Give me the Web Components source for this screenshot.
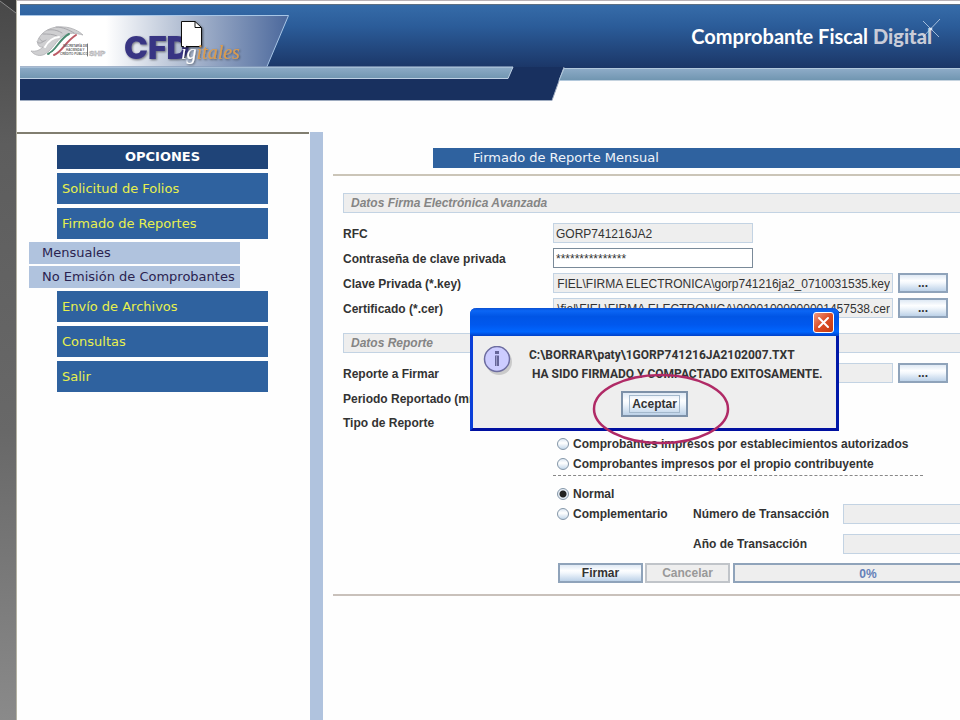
<!DOCTYPE html>
<html lang="es">
<head>
    <meta charset="utf-8">
    <title>Comprobante Fiscal Digital</title>
    <style>
        body {
            margin: 0;
            background-color: #fefefe;
            font-family: "Liberation Sans", sans-serif;
            font-size: 12px;
            color: #333;
        }
    </style>
</head>
<body>
    <cfd-app>
        <cfd-banner slot="banner"></cfd-banner>

        <side-menu slot="menu" heading="OPCIONES">
            <menu-item>Solicitud de Folios</menu-item>
            <menu-item>Firmado de Reportes</menu-item>
            <menu-item sub>Mensuales</menu-item>
            <menu-item sub>No Emisión de Comprobantes</menu-item>
            <menu-item>Envío de Archivos</menu-item>
            <menu-item>Consultas</menu-item>
            <menu-item>Salir</menu-item>
        </side-menu>

        <report-panel heading="Firmado de Reporte Mensual">
            <form-section heading="Datos Firma Electrónica Avanzada">
                <form-field label="RFC" value="GORP741216JA2" readonly></form-field>
                <form-field label="Contraseña de clave privada" value="***************"></form-field>
                <form-field label="Clave Privada (*.key)" value="FIEL\FIRMA ELECTRONICA\gorp741216ja2_0710031535.key" readonly browse></form-field>
                <form-field label="Certificado (*.cer)" value="\fiel\FIEL\FIRMA ELECTRONICA\00001000000001457538.cer" readonly browse></form-field>
            </form-section>
            <form-section heading="Datos Reporte">
                <form-field label="Reporte a Firmar" value="" readonly browse></form-field>
                <form-field label="Periodo Reportado (mmaaaa)" value=""></form-field>
                <report-type></report-type>
            </form-section>
            <action-bar></action-bar>
        </report-panel>

        <message-dialog slot="dialog">
            <span>C:\BORRAR\paty\1GORP741216JA2102007.TXT</span>
            <span>&nbsp;HA SIDO FIRMADO Y COMPACTADO EXITOSAMENTE.</span>
        </message-dialog>
    </cfd-app>

    <script>
        // look of the Swing buttons, shared by every element that has one
        const buttonStyle = `
            button {
                box-sizing: border-box;
                height: 20px;
                padding: 0;
                border: 2px solid #8fa3ba;
                border-radius: 0;
                background: linear-gradient(#dfe9f4, #fdfeff 35%, #f2f7fc 50%, #bdd2e8);
                color: #333;
                font: bold 12px "Liberation Sans", sans-serif;
                line-height: 16px;
            }

            button:disabled {
                border-color: #c0c4c9;
                background: #eee;
                color: #999;
            }
        `;

        class CfdApp extends HTMLElement {
            constructor() {
                super();
                this.attachShadow({ mode: "open" }).innerHTML = `
                    <style>
                        :host {
                            display: grid;
                            grid-template-columns: 17px minmax(0, 1fr);
                            min-height: 100vh;
                            position: relative;
                            overflow: hidden;
                        }

                        .edge {
                            box-sizing: border-box;
                            border-right: 1px solid #b5b3a4;
                            background: linear-gradient(#484848, #5d5d5d 20%, #686868 60%, #8a8a8a);
                        }

                        .edge svg {
                            display: block;
                        }

                        .page {
                            display: flex;
                            flex-direction: column;
                        }

                        .frames {
                            display: flex;
                            flex: 1;
                        }

                        .menu {
                            flex: 0 0 292px;
                            border-top: 2px solid #817e70;
                        }

                        .divider {
                            flex: 0 0 13px;
                            margin-left: 1px;
                            background-color: #b0c3de;
                        }

                        .content {
                            flex: 1;
                            min-width: 0;
                            overflow: hidden;
                        }
                    </style>
                    <div class="edge">
                        <svg width="16" height="16"><path d="M0 1 16 13V0H0z" fill="#3a3a3a"/><path d="M0 1 16 13" stroke="#8b8b8b"/></svg>
                    </div>
                    <div class="page">
                        <slot name="banner"></slot>
                        <div class="frames">
                            <div class="menu"><slot name="menu"></slot></div>
                            <div class="divider"></div>
                            <div class="content"><slot></slot></div>
                        </div>
                    </div>
                    <slot name="dialog"></slot>
                `;
            }
        }

        class CfdBanner extends HTMLElement {
            constructor() {
                super();
                this.attachShadow({ mode: "open" }).innerHTML = `
                    <style>
                        :host {
                            display: flex;
                            height: 128px;
                            padding-left: 3px;
                            border-top: 1px solid #b9b2b6;
                            padding-top: 3px;
                        }

                        .art {
                            flex: none;
                            display: block;
                        }

                        .brand {
                            flex: 1;
                            display: flex;
                            flex-direction: column;
                        }

                        .name {
                            display: flex;
                            align-items: center;
                            justify-content: flex-end;
                            gap: 5px;
                            height: 64px;
                            padding-right: 28px;
                            background: linear-gradient(#5d6f82 1px, #366ca9 1px, #2b5c99 35%, #1b3667);
                            color: #fff;
                            font: bold 20px/24px Lato, sans-serif;
                            white-space: nowrap;
                            position: relative;
                        }

                        .name b {
                            color: #c9ccd8;
                        }

                        .name svg {
                            position: absolute;
                            right: 18px;
                            top: 15px;
                        }

                        .band {
                            height: 11px;
                            border-bottom: 1px solid #c5d3df;
                            border-top: 1px solid #b2c8dc;
                            background: linear-gradient(#8dabc7, #7196b1);
                        }
                    </style>
                    <svg class="art" width="560" height="100" viewBox="0 4 560 100">
                        <defs>
                            <linearGradient id="sky" x2="0" y2="1">
                                <stop stop-color="#366ca9"/>
                                <stop offset=".35" stop-color="#2b5c99"/>
                                <stop offset="1" stop-color="#1b3667"/>
                            </linearGradient>
                            <linearGradient id="plate">
                                <stop offset=".32" stop-color="#fff"/>
                                <stop offset=".6" stop-color="#b3bfd3"/>
                                <stop offset="1" stop-color="#4b689c"/>
                            </linearGradient>
                            <linearGradient id="steel" x2="0" y2="1">
                                <stop stop-color="#8dabc7"/>
                                <stop offset="1" stop-color="#7196b1"/>
                            </linearGradient>
                            <filter id="shade" x="-20%" y="-20%" width="140%" height="150%">
                                <feDropShadow dx="1" dy="1" stdDeviation="1" flood-opacity=".5"/>
                            </filter>
                        </defs>
                        <path d="M0 4H560V68H0z" fill="url(#sky)"/>
                        <path d="M0 4.500H560" stroke="#5d6f82"/>
                        <path d="M0 67H544L532 100.500H0z" fill="#18305f"/>
                        <path d="M544 67 532 100.500H0" fill="none" stroke="#9eabc0"/>
                        <path d="M0 15.500H268.500L247 66.500H0z" fill="url(#plate)"/>
                        <path d="M0 15.500H268.500L247 66.500" fill="none" stroke="#a8c6e6"/>
                        <path d="M0 67H493L488 78.500H0z" fill="url(#steel)"/>
                        <path d="M0 67H493L488 78.500H0" fill="none" stroke="#bdd0e4"/>
                        <path d="M544 68H560V80H539z" fill="url(#steel)"/>
                        <path d="M560 68.500H544L539 80.500H560" fill="none" stroke="#b2c8dc"/>

                        <!-- ministry emblem: grey ribbon with the flag colours -->
                        <g fill="none" stroke-linecap="round">
                            <path d="M19 38c4-8 15-12 24-11 9 0 17 5 20 8-7-2-14-3-20 1-7 5-10 13-18 18-5 3-11 1-14-3 5 1 9-1 12-4-5 1-7-5-4-9z" fill="#cfcfd1" stroke="#b9b9bc"/>
                            <path d="M20 39c1 3 4 3 6 1M23 34c5 0 10 0 14 2M28 30c6-1 11 1 14 3M36 27c7 0 13 3 18 6M17 42c2 2 5 1 7-1" stroke="#a8a8ac"/>
                            <path d="M25 47c3-6 9-10 14-10" stroke="#fff" stroke-width="2"/>
                            <path d="M28 54c8-3 11-15 21-20" stroke="#4a8a70" stroke-width="2"/>
                            <path d="M31 54c8-3 12-13 22-19" stroke="#fff" stroke-width="2"/>
                            <path d="M34 55c8-3 11-13 22-20" stroke="#bd5b66" stroke-width="2"/>
                            <path d="M67.500 44V56" stroke="#777"/>
                        </g>
                        <g font-family="Liberation Sans, sans-serif" font-weight="bold" fill="#66666a">
                            <text x="65" y="47" font-size="3">
                                <tspan x="43">SECRETARÍA DE</tspan>
                                <tspan x="46" dy="4">HACIENDA Y</tspan>
                                <tspan x="40" dy="4">CRÉDITO PÚBLICO</tspan>
                            </text>
                            <text x="69" y="56" font-size="8" fill="#e4e4e6" stroke="#a9a9ad" stroke-width=".5">SHP</text>
                        </g>

                        <text x="104" y="59" font-family="Inter, sans-serif" font-weight="900" font-size="32" fill="#393683" filter="url(#shade)">CFD</text>
                        <g filter="url(#shade)">
                            <path d="M161.500 21.500H175L181.500 27.500V46.500H161.500z" fill="#fff" stroke="#111"/>
                            <path d="M175 21.500V27.500H181.500" fill="none" stroke="#111"/>
                        </g>
                        <g font-family="Liberation Serif, serif" font-style="italic" font-size="20" filter="url(#shade)">
                            <text x="161" y="59"><tspan fill="#fff">ig</tspan><tspan fill="#dd9b4a">itales</tspan></text>
                        </g>
                    </svg>
                    <div class="brand">
                        <div class="name">
                            <span>Comprobante Fiscal</span>
                            <b>Digital</b>
                            <svg width="22" height="20" stroke="#d8e5f5"><path d="M3 2 19 18M20 0 3 18" stroke-width=".7"/><circle cx="11" cy="10" r="1" fill="#fff"/></svg>
                        </div>
                        <div class="band"></div>
                    </div>
                `;
            }
        }

        class SideMenu extends HTMLElement {
            constructor() {
                super();
                this.attachShadow({ mode: "open" }).innerHTML = `
                    <style>
                        :host {
                            display: block;
                            padding: 11px 41px 0 40px;
                            font-family: "DejaVu Sans", sans-serif;
                        }

                        h2 {
                            margin: 0 0 2px;
                            background-color: #1f4478;
                            color: #fff;
                            font-size: 13px;
                            line-height: 24px;
                            text-align: center;
                        }

                        nav {
                            display: flex;
                            flex-direction: column;
                        }
                    </style>
                    <h2>${this.getAttribute("heading")}</h2>
                    <nav><slot></slot></nav>
                `;
            }
        }

        class MenuItem extends HTMLElement {
            constructor() {
                super();
                this.attachShadow({ mode: "open" }).innerHTML = `
                    <style>
                        :host {
                            display: block;
                            margin: 2px 0;
                        }

                        a {
                            display: block;
                            padding-left: 5px;
                            background-color: #2f629f;
                            color: #e8f04e;
                            font-size: 13px;
                            line-height: 31px;
                            text-decoration: none;
                            white-space: nowrap;
                        }

                        :host([sub]) {
                            margin: 1px 28px 1px -28px;
                        }

                        :host([sub]) a {
                            padding-left: 13px;
                            background-color: #b0c3de;
                            color: #2b2350;
                            line-height: 22px;
                        }
                    </style>
                    <a href="#"><slot></slot></a>
                `;
            }
        }

        class ReportPanel extends HTMLElement {
            constructor() {
                super();
                this.attachShadow({ mode: "open" }).innerHTML = `
                    <style>
                        :host {
                            display: block;
                            padding: 16px 0 0 10px;
                        }

                        h1 {
                            margin: 0 0 6px 100px;
                            padding-left: 40px;
                            background-color: #2f629f;
                            color: #f0f4fa;
                            font: 13px/20px "DejaVu Sans", sans-serif;
                        }

                        form {
                            /* wider than the frame, the frame cuts it */
                            min-width: 660px;
                            padding: 17px 0 11px 10px;
                            border-top: 2px solid #cbc5b8;
                            border-bottom: 2px solid #c9c1bb;
                        }
                    </style>
                    <h1>${this.getAttribute("heading")}</h1>
                    <form><slot></slot></form>
                `;
            }
        }

        class FormSection extends HTMLElement {
            constructor() {
                super();
                this.attachShadow({ mode: "open" }).innerHTML = `
                    <style>
                        :host {
                            display: block;
                            margin-bottom: 15px;
                        }

                        h3 {
                            margin: 0 0 10px;
                            padding-left: 7px;
                            border: 1px solid #c3d3e3;
                            background-color: #eee;
                            color: #858585;
                            font-size: 12px;
                            font-style: italic;
                            line-height: 18px;
                        }

                        .rows {
                            display: grid;
                            gap: 5px;
                        }
                    </style>
                    <h3>${this.getAttribute("heading")}</h3>
                    <div class="rows"><slot></slot></div>
                `;
            }
        }

        class FormField extends HTMLElement {
            constructor() {
                super();
                const readonly = this.hasAttribute("readonly");
                const browse = this.hasAttribute("browse");

                this.attachShadow({ mode: "open" }).innerHTML = `
                    <style>
                        :host {
                            display: grid;
                            grid-template-columns: 210px ${browse ? "340px" : "200px"} 50px;
                            height: 20px;
                            line-height: 22px;
                        }

                        label {
                            font-weight: bold;
                            white-space: nowrap;
                        }

                        input {
                            box-sizing: border-box;
                            width: 100%;
                            height: 20px;
                            padding: 1px 2px 0;
                            border: 1px solid #7a8a99;
                            background-color: #fff;
                            color: #333;
                            font: 12px "Liberation Sans", sans-serif;
                            ${browse ? "text-align: right;" : ""}
                        }

                        input:read-only {
                            border-color: #c3d3e3;
                            background-color: #eee;
                        }

                        ${buttonStyle}

                        button {
                            margin-left: 5px;
                            width: 50px;
                        }
                    </style>
                    <label for="field">${this.getAttribute("label")}</label>
                    <input id="field" type="text" ${readonly ? "readonly" : ""}>
                    ${browse ? `<button type="button">...</button>` : ""}
                `;
                this.shadowRoot.querySelector("input").value = this.getAttribute("value");
            }
        }

        class ReportType extends HTMLElement {
            constructor() {
                super();
                this.attachShadow({ mode: "open" }).innerHTML = `
                    <style>
                        :host {
                            display: grid;
                            grid-template-columns: 210px 1fr;
                            font-weight: bold;
                            line-height: 20px;
                        }

                        .options {
                            padding-top: 21px;
                        }

                        .option {
                            display: flex;
                            align-items: center;
                            gap: 4px;
                            padding-left: 4px;
                            white-space: nowrap;
                        }

                        input[type="radio"] {
                            appearance: none;
                            box-sizing: border-box;
                            width: 12px;
                            height: 12px;
                            margin: 0;
                            border: 1px solid #8496a8;
                            border-radius: 50%;
                            background: linear-gradient(#dde8f3, #fff 40%, #c3d7ea);
                        }

                        input[type="radio"]:checked {
                            background: radial-gradient(circle, #222 3px, #e6eef7 4px);
                        }

                        hr {
                            width: 370px;
                            height: 0;
                            margin: 1px 0 8px;
                            border: 0;
                            border-top: 1px dashed #888;
                        }

                        .kind {
                            display: grid;
                            grid-template-columns: 140px 150px 1fr;
                        }

                        .kind > label[for] {
                            grid-column: 2;
                        }

                        .kind .option {
                            grid-column: 1;
                        }

                        .year {
                            margin-top: 10px;
                        }

                        input[type="text"] {
                            box-sizing: border-box;
                            width: 100%;
                            height: 20px;
                            border: 1px solid #c3d3e3;
                            background-color: #eee;
                        }
                    </style>
                    <span>Tipo de Reporte</span>
                    <div class="options">
                        <label class="option"><input type="radio" name="source">Comprobantes impresos por establecimientos autorizados</label>
                        <label class="option"><input type="radio" name="source">Comprobantes impresos por el propio contribuyente</label>
                        <hr>
                        <label class="option"><input type="radio" name="kind" checked>Normal</label>
                        <div class="kind">
                            <label class="option"><input type="radio" name="kind">Complementario</label>
                            <label for="number">Número de Transacción</label>
                            <input id="number" type="text" disabled>
                        </div>
                        <div class="kind year">
                            <label for="year">Año de Transacción</label>
                            <input id="year" type="text" disabled>
                        </div>
                    </div>
                `;
            }
        }

        class ActionBar extends HTMLElement {
            constructor() {
                super();
                this.attachShadow({ mode: "open" }).innerHTML = `
                    <style>
                        :host {
                            display: flex;
                            gap: 2px;
                            margin-top: -6px;
                            padding-left: 215px;
                        }

                        ${buttonStyle}

                        button {
                            width: 85px;
                        }

                        .progress {
                            box-sizing: border-box;
                            flex: 1;
                            height: 20px;
                            margin-left: 1px;
                            border: 2px solid #8fa3ba;
                            background-color: #eee;
                            color: #6480b8;
                            font-weight: bold;
                            line-height: 18px;
                            text-align: center;
                        }
                    </style>
                    <button type="button">Firmar</button>
                    <button type="button" disabled>Cancelar</button>
                    <div class="progress" role="progressbar" aria-valuenow="0">0%</div>
                `;
            }
        }

        class MessageDialog extends HTMLElement {
            constructor() {
                super();
                this.attachShadow({ mode: "open" }).innerHTML = `
                    <style>
                        :host {
                            position: absolute;
                            left: 470px;
                            top: 308px;
                            box-sizing: border-box;
                            width: 369px;
                            border: 3px solid #0a3fd8;
                            border-top: 0;
                            border-right-color: #0018a8;
                            border-bottom-color: #0010a0;
                            border-radius: 6px 6px 0 0;
                            background-color: #eee;
                        }

                        ${buttonStyle}

                        header {
                            display: flex;
                            align-items: center;
                            justify-content: flex-end;
                            height: 28px;
                            margin: 0 -3px;
                            padding-right: 5px;
                            border-radius: 6px 6px 0 0;
                            background: linear-gradient(#0a4fd0, #0b66f5 10%, #0055e5 30%, #0058ee 60%, #0066ff 85%, #0040c8);
                        }

                        header button {
                            width: 21px;
                            height: 21px;
                            border: 1px solid #fff;
                            border-radius: 3px;
                            background: linear-gradient(135deg, #f09a80, #dc4c24 50%, #c23a12);
                        }

                        header svg {
                            display: block;
                            margin: auto;
                        }

                        .body {
                            display: flex;
                            gap: 15px;
                            padding: 10px 0 0 9px;
                        }

                        .icon {
                            flex: none;
                        }

                        .text {
                            display: flex;
                            flex-direction: column;
                            padding-bottom: 7px;
                            font: bold 12px/19px Roboto, "Liberation Sans", sans-serif;
                            white-space: nowrap;
                        }

                        footer {
                            display: flex;
                            justify-content: center;
                            padding-bottom: 11px;
                        }

                        footer button {
                            width: 67px;
                            height: 26px;
                            padding: 1px 7px;
                            border-color: #7d91a8;
                        }

                        footer span {
                            display: block;
                            outline: 1px solid #a3b8cc;
                        }

                        .mark {
                            position: absolute;
                            left: 117px;
                            top: 64px;
                        }
                    </style>
                    <header>
                        <button type="button" aria-label="Cerrar">
                            <svg width="13" height="13" stroke="#fff" stroke-width="2" stroke-linecap="round"><path d="M2 2 11 11M11 2 2 11"/></svg>
                        </button>
                    </header>
                    <div class="body">
                        <svg class="icon" width="32" height="32">
                            <circle cx="17" cy="16" r="13" fill="#bbb" opacity=".7"/>
                            <circle cx="15" cy="13" r="12.500" fill="#ccccff" stroke="#6d6da0" stroke-width="1.500"/>
                            <path d="M13 5H17V8H13zM13 9.500H17V20H13z" fill="#666699"/>
                            <path d="M14.500 10V20" stroke="#9a9ac8"/>
                        </svg>
                        <div class="text"><slot></slot></div>
                    </div>
                    <footer><button type="button"><span>Aceptar</span></button></footer>
                    <svg class="mark" width="142" height="74"><ellipse cx="71" cy="37" rx="67" ry="34" fill="none" stroke="#b02a66" stroke-width="2.500"/></svg>
                `;
            }
        }

        customElements.define("cfd-app", CfdApp);
        customElements.define("cfd-banner", CfdBanner);
        customElements.define("side-menu", SideMenu);
        customElements.define("menu-item", MenuItem);
        customElements.define("report-panel", ReportPanel);
        customElements.define("form-section", FormSection);
        customElements.define("form-field", FormField);
        customElements.define("report-type", ReportType);
        customElements.define("action-bar", ActionBar);
        customElements.define("message-dialog", MessageDialog);
    </script>
</body>
</html>
